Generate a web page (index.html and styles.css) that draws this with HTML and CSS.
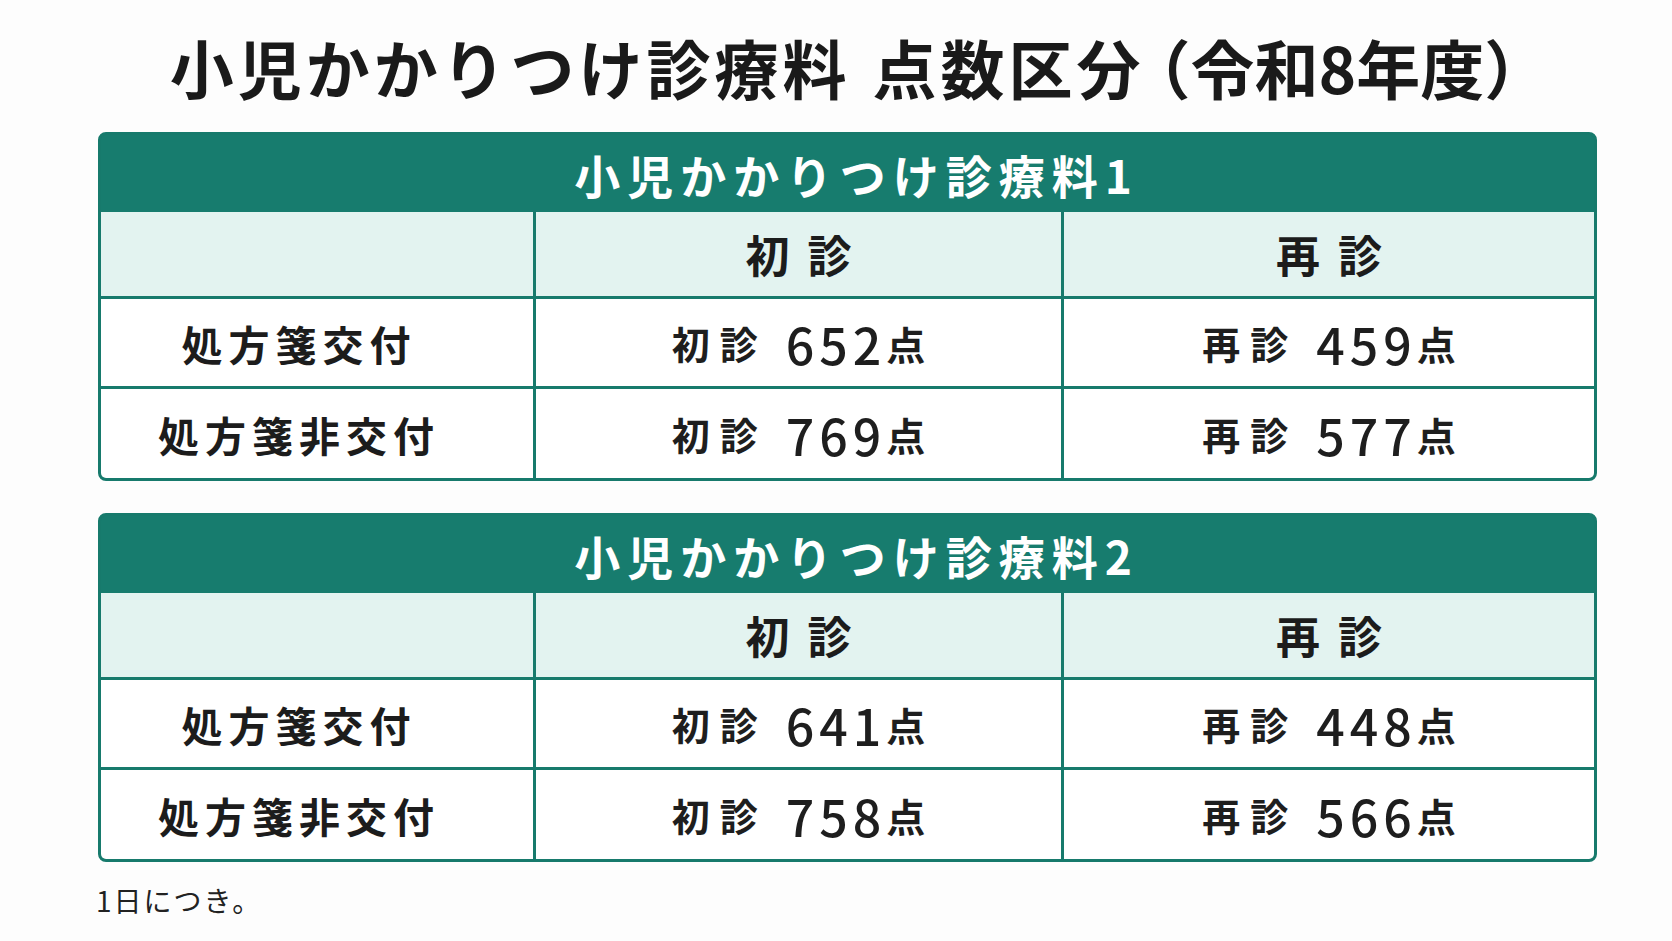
FILE: index.html
```html
<!DOCTYPE html>
<html lang="ja">
<head>
<meta charset="utf-8">
<title>小児かかりつけ診療料 点数区分（令和8年度）</title>
<link rel="stylesheet" href="styles.css">
</head>
<body>
<main class="page">
  <h1 class="title">小児かかりつけ診療料<span class="gap"></span>点数区分<span class="open">（</span><span class="year">令和8年度）</span></h1>

  <section class="fee-table">
    <div class="fee-head">小児かかりつけ診療料1</div>
    <div class="fee-grid">
      <div class="cell sub"></div>
      <div class="cell sub col-head">初診</div>
      <div class="cell sub col-head">再診</div>

      <div class="cell row-label">処方箋交付</div>
      <div class="cell val"><span class="lbl">初診</span><span class="num">652</span><span class="pt">点</span></div>
      <div class="cell val"><span class="lbl">再診</span><span class="num">459</span><span class="pt">点</span></div>

      <div class="cell row-label last">処方箋非交付</div>
      <div class="cell val last"><span class="lbl">初診</span><span class="num">769</span><span class="pt">点</span></div>
      <div class="cell val last"><span class="lbl">再診</span><span class="num">577</span><span class="pt">点</span></div>
    </div>
  </section>

  <section class="fee-table">
    <div class="fee-head">小児かかりつけ診療料2</div>
    <div class="fee-grid">
      <div class="cell sub"></div>
      <div class="cell sub col-head">初診</div>
      <div class="cell sub col-head">再診</div>

      <div class="cell row-label">処方箋交付</div>
      <div class="cell val"><span class="lbl">初診</span><span class="num">641</span><span class="pt">点</span></div>
      <div class="cell val"><span class="lbl">再診</span><span class="num">448</span><span class="pt">点</span></div>

      <div class="cell row-label last">処方箋非交付</div>
      <div class="cell val last"><span class="lbl">初診</span><span class="num">758</span><span class="pt">点</span></div>
      <div class="cell val last"><span class="lbl">再診</span><span class="num">566</span><span class="pt">点</span></div>
    </div>
  </section>

  <p class="note">1日につき。</p>
</main>
</body>
</html>
```

FILE: styles.css
```css
* {
  box-sizing: border-box;
}

html, body {
  margin: 0;
  padding: 0;
  background: #fdfdfd;
}

body {
  font-family: "Noto Sans CJK JP", "Noto Sans", sans-serif;
  color: #1e1e1e;
}

.page {
  width: 1672px;
  height: 941px;
  padding: 30px 75px 0 98px;
  overflow: hidden;
}

.title {
  margin: 0 0 30px -98px;
  width: 1672px;
  padding-left: 46px;
  text-align: center;
  font-size: 64px;
  line-height: 72px;
  font-weight: 700;
  letter-spacing: 4px;
  color: #1a1a1a;
}

.title .gap {
  display: inline-block;
  width: 22px;
}

.title .open {
  font-feature-settings: "halt";
  margin-left: 14px;
  letter-spacing: 0;
}

.title .year {
  letter-spacing: 0;
}

.fee-table {
  width: 1499px;
  border: 3px solid #177a6c;
  border-radius: 8px;
  overflow: hidden;
  background: #177a6c;
  margin-bottom: 32px;
}

.fee-head {
  height: 77px;
  display: flex;
  align-items: center;
  justify-content: center;
  padding-left: 18px;
  color: #ffffff;
  font-size: 46px;
  font-weight: 700;
  letter-spacing: 7px;
  background: #177c6e;
}

.fee-grid {
  display: grid;
  grid-template-columns: 432px 525px 1fr;
  grid-template-rows: 84px 87px 89px;
  column-gap: 3px;
  row-gap: 3px;
  background: #177a6c;
}

.cell {
  background: #ffffff;
  display: flex;
  align-items: center;
  justify-content: center;
}

.cell.sub {
  background: #e3f3f0;
}

.col-head {
  font-size: 44px;
  font-weight: 700;
  letter-spacing: 18px;
  padding-left: 18px;
  color: #1c1c1c;
}

.row-label {
  font-size: 41px;
  font-weight: 700;
  letter-spacing: 6px;
  padding-right: 36px;
  color: #1c1c1c;
}

.val {
  color: #1e1e1e;
  padding-left: 0;
}

.lbl {
  font-size: 38px;
  font-weight: 700;
  letter-spacing: 10px;
  margin-right: 18px;
}

.num {
  font-size: 50px;
  font-weight: 500;
  letter-spacing: 5px;
}

.pt {
  font-size: 39px;
  font-weight: 700;
}

.note {
  margin: -12px 0 0 -2px;
  font-size: 28px;
  line-height: 36px;
  letter-spacing: 2px;
  color: #222222;
}
```
